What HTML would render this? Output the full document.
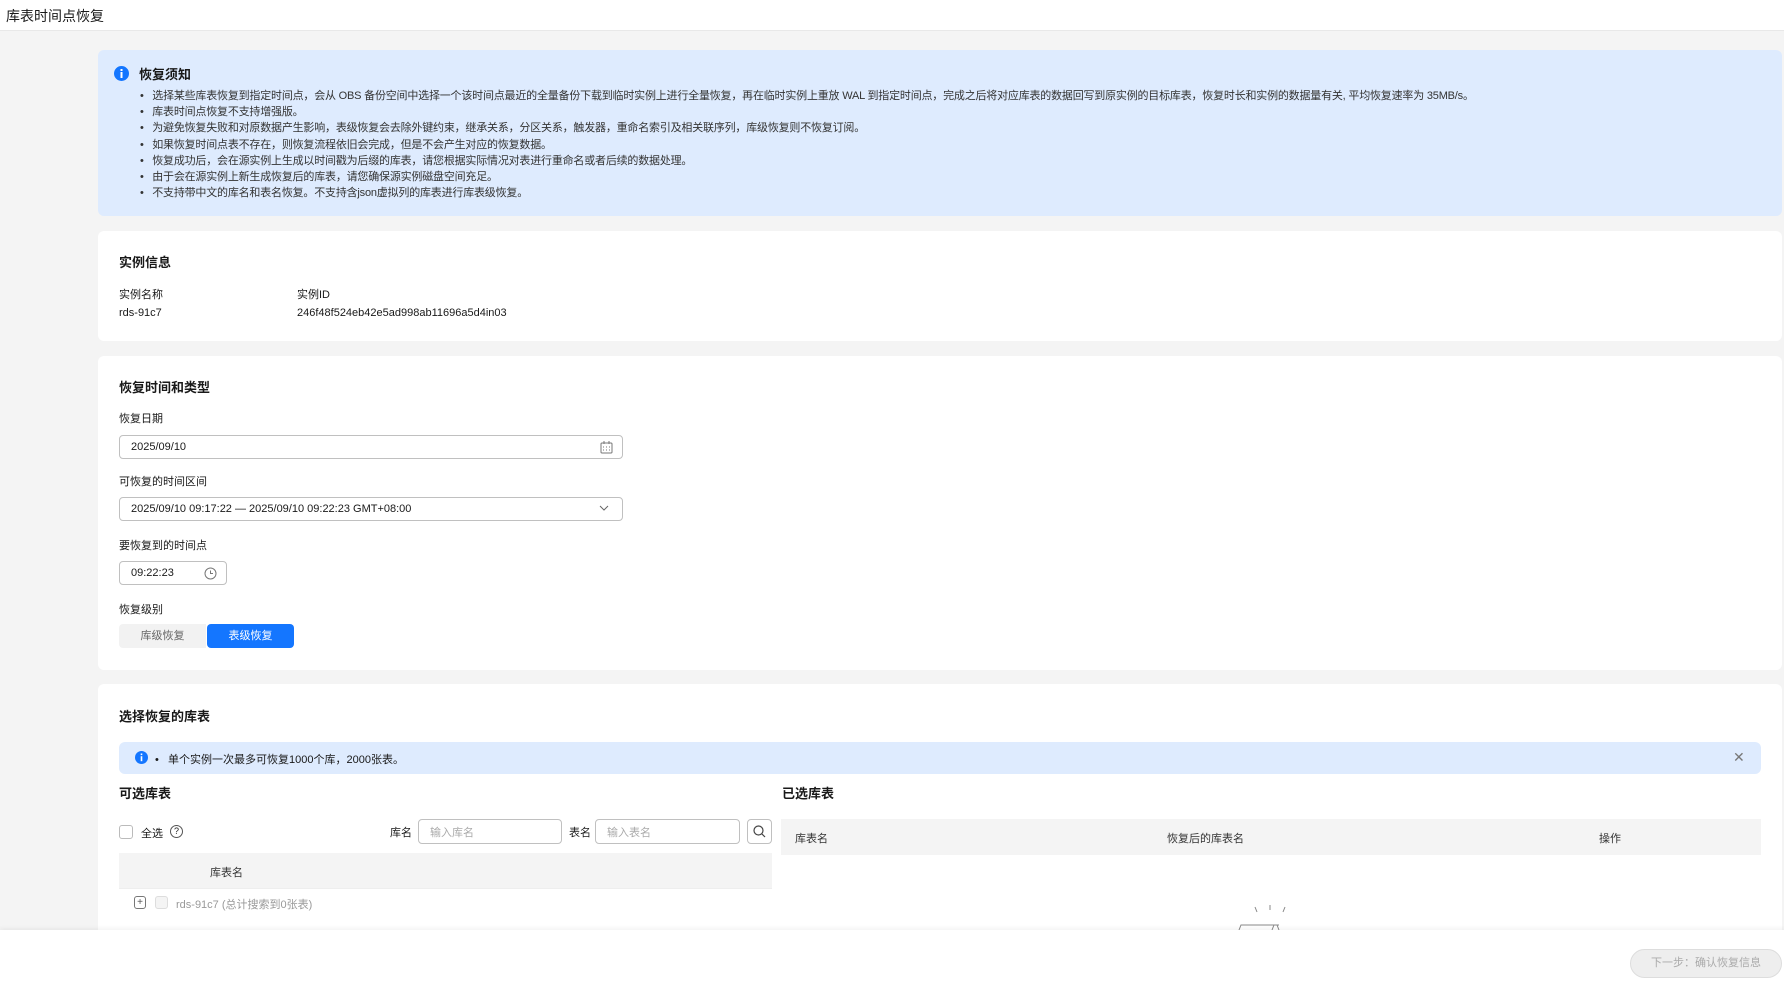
<!DOCTYPE html>
<html><head><meta charset="utf-8"><style>
*{box-sizing:border-box;margin:0;padding:0}
body{width:1784px;height:984px;overflow:hidden;background:#f4f4f4;font-family:"Liberation Sans","Noto Sans CJK SC",sans-serif;color:#191919;font-size:11px;position:relative}
.a{position:absolute;white-space:nowrap}
.card{position:absolute;left:98px;width:1684px;background:#fff;border-radius:6px}
.t{font-size:13px;font-weight:bold}
.inp{position:absolute;border:1px solid #c0c0c0;border-radius:4px;background:#fff;font-size:11px;padding-left:11px;display:flex;align-items:center}
.ph{color:#aaa}
</style></head><body>
<div class="a" style="left:0;top:0;width:1784px;height:31px;background:#fff;border-bottom:1px solid #e8e8e8"></div>
<div class="a" style="left:6px;top:6px;font-size:14px">库表时间点恢复</div>

<div class="a" style="left:98px;top:50px;width:1684px;height:166px;background:#deebfe;border-radius:6px"></div>
<svg class="a" style="left:114px;top:66px" width="15" height="15"><circle cx="7.5" cy="7.5" r="7.5" fill="#1476ff"/><rect x="6.5" y="3" width="2" height="2" fill="#fff"/><rect x="6.5" y="6" width="2" height="6" fill="#fff"/></svg>
<div class="a t" style="left:139px;top:64px">恢复须知</div>
<div class="a" style="left:140px;top:88px;line-height:16.2px;color:#333;letter-spacing:-0.2px">
• &nbsp;&nbsp;选择某些库表恢复到指定时间点，会从 OBS 备份空间中选择一个该时间点最近的全量备份下载到临时实例上进行全量恢复，再在临时实例上重放 WAL 到指定时间点，完成之后将对应库表的数据回写到原实例的目标库表，恢复时长和实例的数据量有关, 平均恢复速率为 35MB/s。<br>
• &nbsp;&nbsp;库表时间点恢复不支持增强版。<br>
• &nbsp;&nbsp;为避免恢复失败和对原数据产生影响，表级恢复会去除外键约束，继承关系，分区关系，触发器，重命名索引及相关联序列，库级恢复则不恢复订阅。<br>
• &nbsp;&nbsp;如果恢复时间点表不存在，则恢复流程依旧会完成，但是不会产生对应的恢复数据。<br>
• &nbsp;&nbsp;恢复成功后，会在源实例上生成以时间戳为后缀的库表，请您根据实际情况对表进行重命名或者后续的数据处理。<br>
• &nbsp;&nbsp;由于会在源实例上新生成恢复后的库表，请您确保源实例磁盘空间充足。<br>
• &nbsp;&nbsp;不支持带中文的库名和表名恢复。不支持含json虚拟列的库表进行库表级恢复。</div>

<div class="card" style="top:231px;height:110px"></div>
<div class="a t" style="left:119px;top:252px">实例信息</div>
<div class="a" style="left:119px;top:286px">实例名称</div>
<div class="a" style="left:297px;top:286px">实例ID</div>
<div class="a" style="left:119px;top:307px">rds-91c7</div>
<div class="a" style="left:297px;top:307px">246f48f524eb42e5ad998ab11696a5d4in03</div>

<div class="card" style="top:356px;height:314px"></div>
<div class="a t" style="left:119px;top:377px">恢复时间和类型</div>
<div class="a" style="left:119px;top:410px">恢复日期</div>
<div class="inp" style="left:119px;top:435px;width:504px;height:24px">2025/09/10</div>
<svg class="a" style="left:600px;top:441px" width="13" height="13" fill="none" stroke="#777"><rect x="1" y="2" width="11" height="10" rx="1"/><path d="M4 0v3M9 0v3M3 6h1M6 6h1M9 6h1M3 9h1M6 9h1M9 9h1"/></svg>
<div class="a" style="left:119px;top:473px">可恢复的时间区间</div>
<div class="inp" style="left:119px;top:497px;width:504px;height:24px">2025/09/10 09:17:22 — 2025/09/10 09:22:23 GMT+08:00</div>
<svg class="a" style="left:599px;top:504px" width="10" height="8" fill="none" stroke="#666"><path d="M1 2l4 4 4-4"/></svg>
<div class="a" style="left:119px;top:537px">要恢复到的时间点</div>
<div class="inp" style="left:119px;top:561px;width:108px;height:24px">09:22:23</div>
<svg class="a" style="left:204px;top:567px" width="13" height="13" fill="none" stroke="#777"><circle cx="6.5" cy="6.5" r="5.5"/><path d="M6.5 3.5v3h2.5"/></svg>
<div class="a" style="left:119px;top:601px">恢复级别</div>
<div class="a" style="left:119px;top:624px;width:87px;height:24px;background:#f2f2f2;border-radius:4px 0 0 4px;color:#666;text-align:center;line-height:24px">库级恢复</div>
<div class="a" style="left:207px;top:624px;width:87px;height:24px;background:#1476ff;border-radius:4px;color:#fff;text-align:center;line-height:24px">表级恢复</div>

<div class="card" style="top:684px;height:260px"></div>
<div class="a t" style="left:119px;top:706px">选择恢复的库表</div>
<div class="a" style="left:119px;top:742px;width:1642px;height:32px;background:#deebfe;border-radius:6px"></div>
<svg class="a" style="left:135px;top:751px" width="13" height="13"><circle cx="6.5" cy="6.5" r="6.5" fill="#1476ff"/><rect x="5.7" y="2.5" width="1.6" height="1.6" fill="#fff"/><rect x="5.7" y="5.2" width="1.6" height="5" fill="#fff"/></svg>
<div class="a" style="left:155px;top:751px">•&nbsp;&nbsp; 单个实例一次最多可恢复1000个库，2000张表。</div>
<div class="a" style="left:1733px;top:749px;color:#777;font-size:14px">✕</div>
<div class="a t" style="left:119px;top:783px">可选库表</div>
<div class="a t" style="left:782px;top:783px">已选库表</div>
<div class="a" style="left:119px;top:825px;width:14px;height:14px;border:1px solid #bbb;border-radius:3px"></div>
<div class="a" style="left:141px;top:825px">全选</div>
<div class="a" style="left:170px;top:825px;width:13px;height:13px;border:1px solid #555;border-radius:50%;font-size:9px;text-align:center;line-height:11px">?</div>
<div class="a" style="left:390px;top:824px">库名</div>
<div class="inp ph" style="left:418px;top:819px;width:144px;height:25px">输入库名</div>
<div class="a" style="left:569px;top:824px">表名</div>
<div class="inp ph" style="left:595px;top:819px;width:145px;height:25px">输入表名</div>
<div class="a" style="left:747px;top:819px;width:25px;height:25px;border:1px solid #c0c0c0;border-radius:4px"></div>
<svg class="a" style="left:753px;top:825px" width="13" height="13" fill="none" stroke="#444" stroke-width="1.2"><circle cx="5.5" cy="5.5" r="4.5"/><path d="M9 9l3 3"/></svg>
<div class="a" style="left:119px;top:853px;width:653px;height:36px;background:#f4f4f4;border-bottom:1px solid #eee"></div>
<div class="a" style="left:210px;top:864px;color:#333">库表名</div>
<div class="a" style="left:134px;top:896px;width:12px;height:13px;border:1px solid #777;border-radius:3px;font-size:10px;text-align:center;line-height:11px;color:#555">+</div>
<div class="a" style="left:155px;top:896px;width:13px;height:13px;border:1px solid #ddd;border-radius:3px;background:#f4f4f4"></div>
<div class="a" style="left:176px;top:896px;color:#999">rds-91c7 (总计搜索到0张表)</div>
<div class="a" style="left:781px;top:819px;width:980px;height:36px;background:#f4f4f4"></div>
<div class="a" style="left:795px;top:830px;color:#333">库表名</div>
<div class="a" style="left:1167px;top:830px;color:#333">恢复后的库表名</div>
<div class="a" style="left:1599px;top:830px;color:#333">操作</div>
<svg class="a" style="left:1230px;top:905px" width="80" height="25" fill="none" stroke="#888"><path d="M25 2l2 5M40 0v5M55 2l-2 5M9 25l2-5h36l2 5M42 25l2-5h5"/></svg>

<div class="a" style="left:0;top:930px;width:1784px;height:54px;background:#fff;box-shadow:0 -2px 4px rgba(0,0,0,.05)"></div>
<div class="a" style="left:1630px;top:949px;width:152px;height:29px;background:#eee;border:1px solid #ddd;border-radius:15px;color:#aaa;text-align:center;line-height:27px">下一步：确认恢复信息</div>
</body></html>
